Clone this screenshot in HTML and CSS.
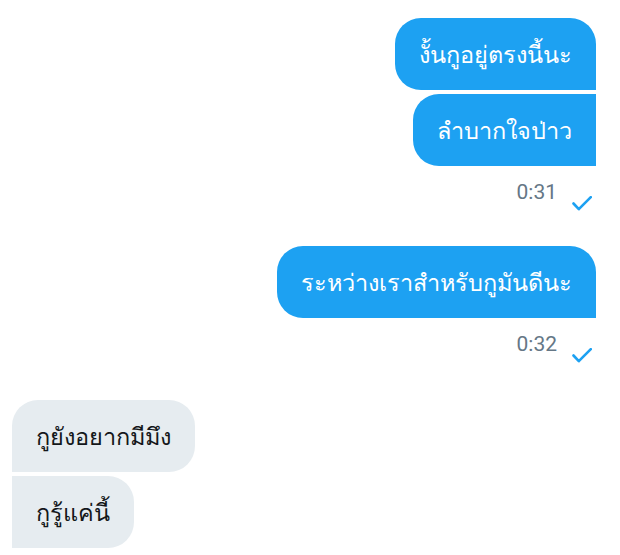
FILE: index.html
```html
<!DOCTYPE html>
<html lang="th">
<head>
<meta charset="utf-8">
<link rel="stylesheet" href="styles.css">
</head>
<body>
<main class="chat">
  <section class="group out">
    <div class="bubble out first">งั้นกูอยู่ตรงนี้นะ</div>
    <div class="bubble out last">ลำบากใจป่าว</div>
    <div class="meta"><span class="time">0:31</span><svg class="check" width="20" height="15" viewBox="0 0 20 15"><path d="M1.5 7.5 L6.8 13.2 L18.8 1.2" fill="none" stroke="#1da1f2" stroke-width="2.6" stroke-linecap="round" stroke-linejoin="round"/></svg></div>
  </section>
  <section class="group out">
    <div class="bubble out first">ระหว่างเราสำหรับกูมันดีนะ</div>
    <div class="meta"><span class="time">0:32</span><svg class="check" width="20" height="15" viewBox="0 0 20 15"><path d="M1.5 7.5 L6.8 13.2 L18.8 1.2" fill="none" stroke="#1da1f2" stroke-width="2.6" stroke-linecap="round" stroke-linejoin="round"/></svg></div>
  </section>
  <section class="group in">
    <div class="bubble in first">กูยังอยากมีมึง</div>
    <div class="bubble in last">กูรู้แค่นี้</div>
  </section>
</main>
</body>
</html>
```
FILE: styles.css
```css
html, body {
  margin: 0;
  padding: 0;
  background: #ffffff;
}
body {
  font-family: "Noto Sans", "DejaVu Sans", sans-serif;
  width: 620px;
  height: 555px;
  overflow: hidden;
}
.chat {
  display: flex;
  flex-direction: column;
  padding: 18px 24px 0 12px;
}
.group {
  display: flex;
  flex-direction: column;
  gap: 4px;
}
.group.out {
  align-items: flex-end;
}
.group.in {
  align-items: flex-start;
}
.group + .group {
  margin-top: 35px;
}
.group.in {
  margin-top: 37px;
}
.bubble {
  font-size: 23.5px;
  line-height: 32px;
  padding: 20px 24px;
  border-radius: 26px;
  white-space: nowrap;
}
.bubble.out {
  background: #1da1f2;
  color: #ffffff;
  border-bottom-right-radius: 0;
}
.bubble.out.last {
  border-top-right-radius: 0;
}
.bubble.in {
  background: #e6ecf0;
  color: #14171a;
  border-bottom-left-radius: 0;
}
.bubble.in.last {
  border-top-left-radius: 0;
}
.meta {
  display: flex;
  align-items: flex-start;
  gap: 15px;
  margin-top: 10px;
  padding-right: 4px;
}
.time {
  font-family: Roboto, "Liberation Sans", sans-serif;
  font-size: 21px;
  line-height: 24px;
  color: #657786;
}
.check {
  display: block;
  margin-top: 16px;
}
```
